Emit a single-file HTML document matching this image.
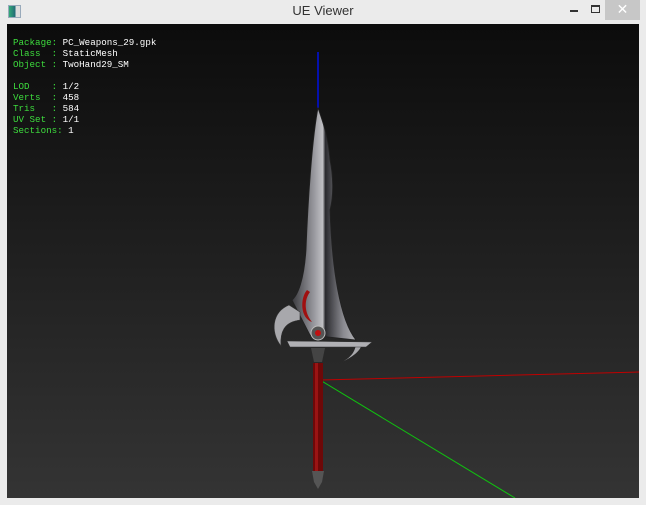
<!DOCTYPE html>
<html><head><style>
html,body{margin:0;padding:0;width:646px;height:505px;overflow:hidden;background:#ebebeb;font-family:"Liberation Sans",sans-serif}
.title{position:absolute;left:0;top:0;width:646px;height:24px;text-align:center;line-height:22px;font-size:13px;color:#333}
.icon{position:absolute;left:8px;top:5px;width:11px;height:11px;border:1px solid #9ab;background:linear-gradient(90deg,#3a7 0,#267 60%,#ddd 60%)}
.close{position:absolute;left:605px;top:0;width:35px;height:20px;background:#c7c7c7;color:#fff;text-align:center;line-height:19px;font-size:14px}
.min{position:absolute;left:570px;top:10px;width:8px;height:2px;background:#333}
.max{position:absolute;left:591px;top:5px;width:7px;height:5px;border:1px solid #333;border-top:2px solid #333}
.client{position:absolute;left:7px;top:24px;width:632px;height:474px;background:linear-gradient(#0c0c0c,#343434);overflow:hidden}
.info{position:absolute;left:6px;top:13px;font-family:"Liberation Mono",monospace;font-size:9.2px;line-height:11px;color:#fff;white-space:pre}
.g{color:#3ddc3d}
</style></head><body>
<div class="title">UE Viewer</div>
<div class="icon"></div>
<div class="min"></div><div class="max"></div>
<div class="close">✕</div>
<div class="client">
<div class="info"><span class="g">Package:</span> PC_Weapons_29.gpk
<span class="g">Class  :</span> StaticMesh
<span class="g">Object :</span> TwoHand29_SM

<span class="g">LOD    :</span> 1/2
<span class="g">Verts  :</span> 458
<span class="g">Tris   :</span> 584
<span class="g">UV Set :</span> 1/1
<span class="g">Sections:</span> 1</div>
<svg width="632" height="474" viewBox="7 24 632 474" style="position:absolute;left:0;top:0">
<defs>
<linearGradient id="m" x1="0" x2="1"><stop offset="0" stop-color="#3a3a3e"/><stop offset="0.35" stop-color="#9a9aa0"/><stop offset="0.48" stop-color="#c0c0c4"/><stop offset="0.52" stop-color="#2a2a2e"/><stop offset="0.8" stop-color="#8a8a90"/><stop offset="1" stop-color="#b0b0b4"/></linearGradient>
</defs>
<line x1="318" y1="52" x2="318" y2="108" stroke="#0010e0" stroke-width="1.5"/>
<line x1="320" y1="380" x2="639" y2="372" stroke="#c00000" stroke-width="1"/>
<line x1="320" y1="380" x2="515" y2="498" stroke="#10c010" stroke-width="1"/>
<path d="M318,108 C312,140 308,200 306,250 C304,280 298,295 292,300 L310,335 L356,340 C340,320 332,270 330,210 C334,195 333,175 330,160 C328,135 322,120 318,108Z" fill="url(#m)" stroke="#222" stroke-width="0.8"/>
<path d="M307,290 C300,298 300,318 312,322 C304,312 304,300 310,292Z" fill="#a01010"/>
<path d="M289,305 C272,312 270,332 281,346 C280,332 284,322 300,320 L300,312Z" fill="#a8a8ac" stroke="#333" stroke-width="0.6"/>
<path d="M356,342 C356,352 350,358 342,362 C354,356 362,350 362,342Z" fill="#a8a8ac"/>
<path d="M287,341 L372,342 L366,347 L290,347Z" fill="#b0b0b4" stroke="#333" stroke-width="0.5"/>
<circle cx="318" cy="333" r="7" fill="#555" stroke="#bbb"/>
<circle cx="318" cy="333" r="3" fill="#c01010"/>
<path d="M311,348 L325,348 L322,362 L314,362Z" fill="#444"/>
<rect x="313" y="363" width="10" height="108" fill="#6e0808"/>
<rect x="315" y="363" width="3" height="108" fill="#9a1414"/>
<path d="M312,471 L324,471 L322,482 L318,489 L314,482Z" fill="#555"/>
</svg>
</div>
</body></html>
